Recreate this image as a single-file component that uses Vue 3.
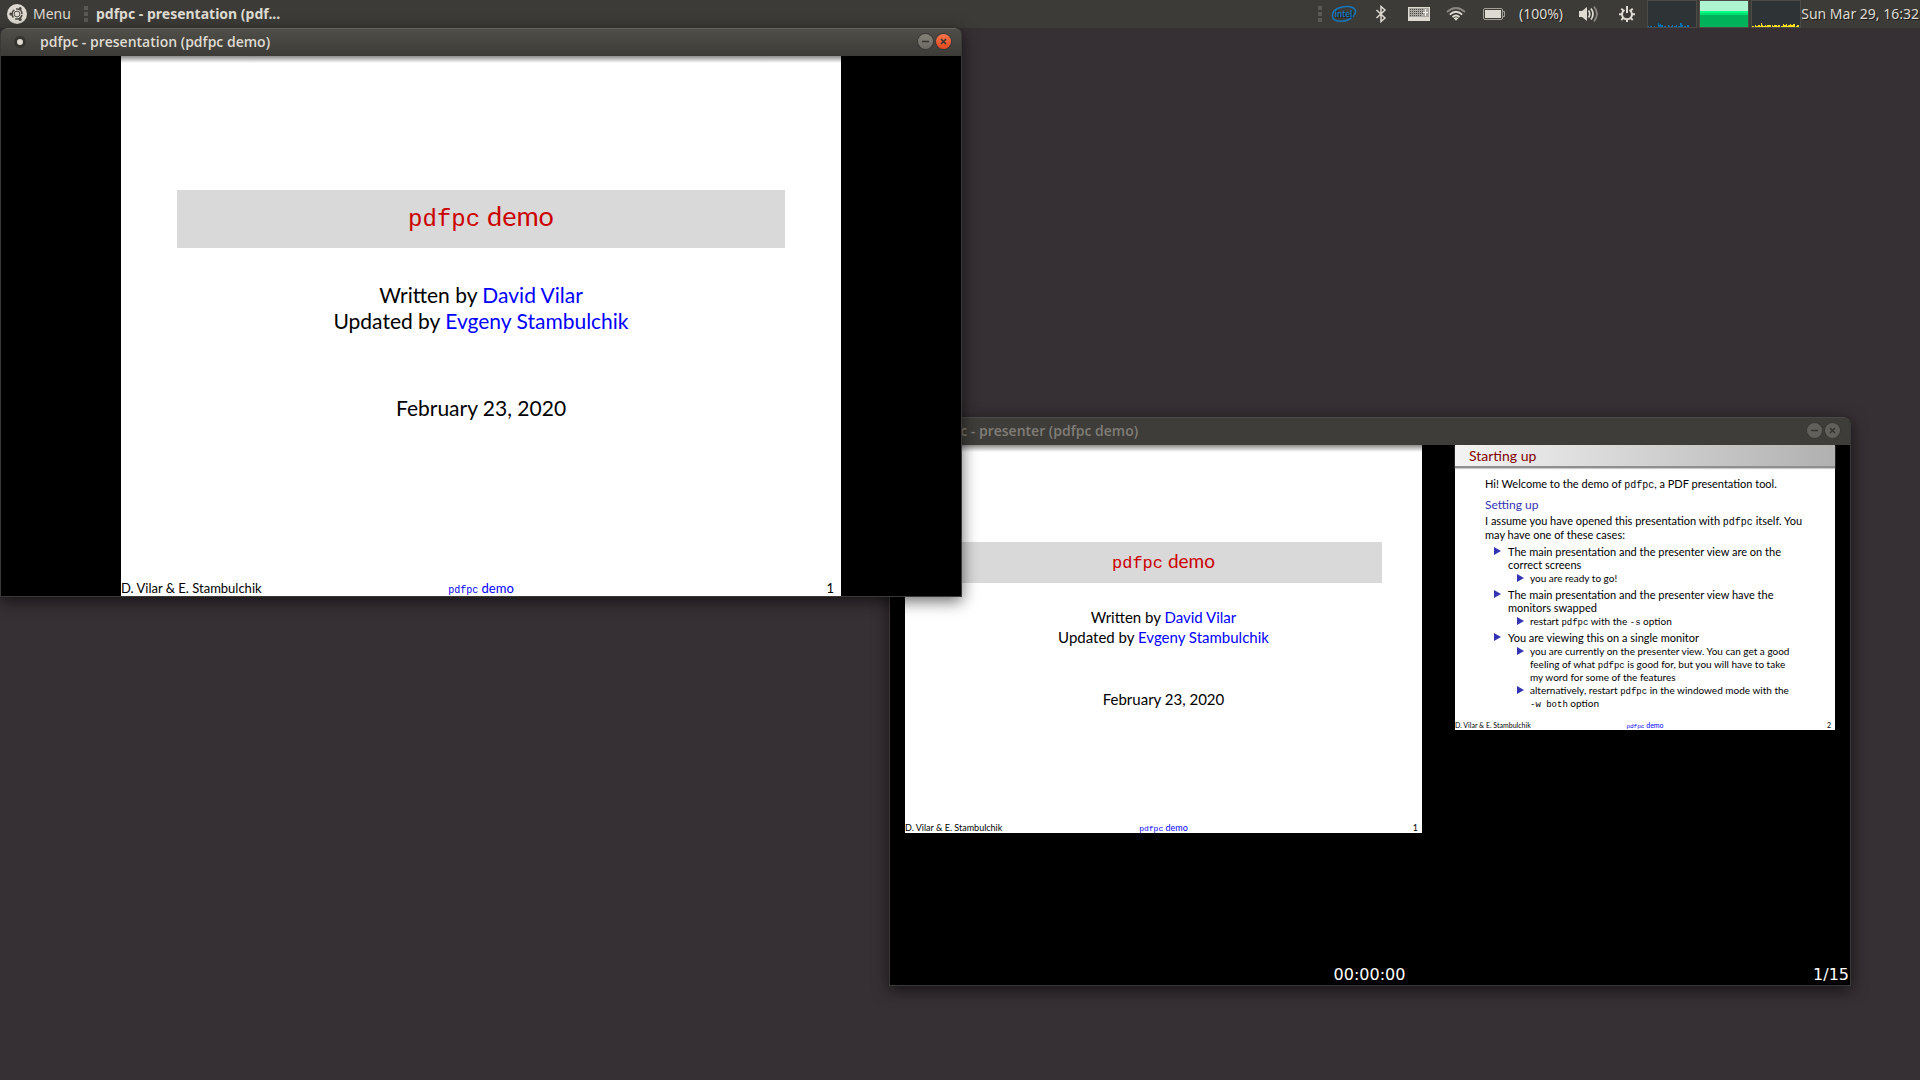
<script setup>
import { ref } from 'vue'

const timer = ref('00:00:00')
const position = ref('1/15')

const cpu = [1, 0, 1, 1, 0, 0, 1, 0, 0, 0, 4, 2, 3, 2, 2, 0, 1, 1, 0, 0, 2, 1, 0, 1, 2, 0, 1, 1, 2, 0, 1, 1, 4, 4, 2, 0, 1, 1, 0, 2, 2, 0]
const net = [1, 1, 0, 2, 1, 1, 2, 2, 1, 4, 2, 1, 1, 2, 1, 2, 2, 2, 2, 0, 2, 1, 2, 2, 2, 1, 2, 2, 0, 1, 1, 3, 2, 2, 3, 1, 2, 2, 3, 2, 2, 3, 3, 0, 1, 2, 2]
</script>

<template>
  <div class="desktop">
    <header class="panel">
      <button class="menu" type="button">
        <svg width="20" height="20" viewBox="0 0 20 20" aria-hidden="true">
          <circle cx="10" cy="10" r="10" fill="#dfdbd2" />
          <g fill="none" stroke="#4a4842">
            <circle cx="10" cy="10" r="5" stroke-width="1.6" stroke-dasharray="8.5 2" stroke-dashoffset="-1" />
            <circle cx="10" cy="10" r="2.9" stroke-width="1" />
          </g>
          <circle cx="3.8" cy="10" r="1.5" fill="#4a4842" />
          <circle cx="13.2" cy="4.6" r="1.5" fill="#4a4842" />
          <circle cx="13.2" cy="15.4" r="1.5" fill="#4a4842" />
        </svg>
        <span>Menu</span>
      </button>
      <span class="grip"><i></i><i></i><i></i></span>
      <button class="task" type="button">pdfpc - presentation (pdf...</button>

      <div class="tray">
        <span class="grip"><i></i><i></i><i></i></span>
        <span class="slot w34">
          <svg width="26" height="18" viewBox="0 0 26 18" aria-label="intel">
            <path d="M3 6 C7 1.500 20 -.5 24 4.500 C26.500 8.500 20 15.500 11 16.300 C5 16.800 1.500 14.500 1.500 11 C1.500 9.500 2 7.600 3 6" fill="none" stroke="#1576bb" stroke-width="1.500" />
            <text x="12.500" y="12" text-anchor="middle" font-size="9" font-weight="700" font-family="Lato, sans-serif" fill="#1576bb">intel</text>
          </svg>
        </span>
        <span class="slot w40">
          <svg width="12" height="18" viewBox="0 0 12 18" fill="none" stroke="#dfdbd2" stroke-width="1.500" aria-label="Bluetooth">
            <path d="M1.500 5 L10 13 L6 16.500 V1.500 L10 5 L1.500 13" />
          </svg>
        </span>
        <span class="slot w36">
          <svg width="22" height="14" viewBox="0 0 22 14" aria-label="Keyboard">
            <rect width="22" height="14" fill="#dfdbd2" />
            <rect x="1" y="1" width="20" height="9" fill="#a9a7a0" />
            <path d="M2 2.500 H15 M2 4.500 H15 M2 6.500 H15 M2 8.500 H13" stroke="#4a4842" stroke-dasharray="1 1" />
            <path d="M15 5.500 H20 M17.500 2 V9" stroke="#f4f2ee" stroke-width="1" />
          </svg>
        </span>
        <span class="slot w38">
          <svg width="20" height="14" viewBox="0 0 20 14" fill="none" stroke-width="1.800" aria-label="Wi-Fi">
            <path d="M1 5 Q10 -3 19 5" stroke="#8b8880" />
            <path d="M3.800 7.600 Q10 2 16.200 7.600" stroke="#dfdbd2" />
            <path d="M6.500 10 Q10 7 13.500 10" stroke="#dfdbd2" />
            <path d="M7.500 11 L10 13.800 L12.500 11 Q10 9.300 7.500 11Z" fill="#dfdbd2" stroke="none" />
          </svg>
        </span>
        <span class="slot w38">
          <svg width="22" height="12" viewBox="0 0 22 12" aria-label="Battery">
            <rect x=".5" y=".5" width="19" height="11" rx="1.500" fill="none" stroke="#a3a098" />
            <rect x="2" y="2" width="16" height="8" fill="#dfdbd2" />
            <path d="M20 3.500 H21.500 V8.500 H20" fill="none" stroke="#a3a098" />
          </svg>
        </span>
        <span class="slot w56">(100%)</span>
        <span class="slot w40">
          <svg width="20" height="18" viewBox="0 0 20 18" fill="none" aria-label="Volume">
            <path d="M0 6 H3 L8 2 V16 L3 12 H0Z" fill="#dfdbd2" />
            <path d="M9.500 5.500 Q12 9 9.500 12.500 M12 3.500 Q16 9 12 14.500" stroke="#dfdbd2" stroke-width="1.700" />
            <path d="M15 1.500 Q21 9 15 16.500" stroke="#8b8880" stroke-width="1.700" />
          </svg>
        </span>
        <span class="slot w36">
          <svg width="16" height="16" viewBox="0 0 16 16" fill="none" stroke="#dfdbd2" aria-label="Session">
            <path d="M5.500 4 A5 5 0 1 0 10.500 4" stroke-width="2" />
            <path d="M8 0 V7" stroke-width="2" />
            <path d="M0 8.300 H3 M13 8.300 H16 M8 13 V16 M2.300 2.600 L4.300 4.600 M13.700 2.600 L11.700 4.600 M2.300 14 L4.400 11.900 M13.700 14 L11.600 11.900" stroke-width="2" />
          </svg>
        </span>
        <div class="graphs">
          <div class="graph cpu"><i v-for="(v, i) in cpu" :key="i" :style="{ height: v + 'px' }"></i></div>
          <div class="graph mem"></div>
          <div class="graph net"><i v-for="(v, i) in net" :key="i" :style="{ height: v + 'px' }"></i></div>
        </div>
        <time class="clock">Sun Mar 29, 16:32</time>
      </div>
    </header>

    <section class="window presenter">
      <div class="titlebar">
        <button class="dot" type="button" aria-label="Window menu"></button>
        <h2>pdfpc - presenter (pdfpc demo)</h2>
        <button class="ctl" type="button" aria-label="Minimize">
          <svg width="15" height="15" viewBox="0 0 15 15"><path d="M4 7.500 H11" /></svg>
        </button>
        <button class="ctl" type="button" aria-label="Close">
          <svg width="15" height="15" viewBox="0 0 15 15"><path d="M5 5 L10 10 M10 5 L5 10" /></svg>
        </button>
      </div>
      <div class="stage">
        <div class="previews">
          <article class="slide cover small">
            <h1><code>pdfpc</code> demo</h1>
            <p class="authors">Written by <a href="#">David Vilar</a><br />Updated by <a href="#">Evgeny Stambulchik</a></p>
            <p class="date">February 23, 2020</p>
            <footer><span>D. Vilar &amp; E. Stambulchik</span><a href="#"><code>pdfpc</code> demo</a><span>1</span></footer>
          </article>
          <article class="slide next">
            <h3>Starting up</h3>
            <div class="body">
              <p>Hi! Welcome to the demo of <code>pdfpc</code>, a PDF presentation tool.</p>
              <h4>Setting up</h4>
              <p>I assume you have opened this presentation with <code>pdfpc</code> itself. You<br />may have one of these cases:</p>
              <ul>
                <li>The main presentation and the presenter view are on the<br />correct screens
                  <ul><li>you are ready to go!</li></ul>
                </li>
                <li>The main presentation and the presenter view have the<br />monitors swapped
                  <ul><li>restart <code>pdfpc</code> with the <code>-s</code> option</li></ul>
                </li>
                <li>You are viewing this on a single monitor
                  <ul>
                    <li>you are currently on the presenter view. You can get a good<br />feeling of what <code>pdfpc</code> is good for, but you will have to take<br />my word for some of the features</li>
                    <li>alternatively, restart <code>pdfpc</code> in the windowed mode with the<br /><code>-w both</code> option</li>
                  </ul>
                </li>
              </ul>
            </div>
            <footer><span>D. Vilar &amp; E. Stambulchik</span><a href="#"><code>pdfpc</code> demo</a><span>2</span></footer>
          </article>
        </div>
        <div class="status"><span class="timer">{{ timer }}</span><span class="position">{{ position }}</span></div>
      </div>
    </section>

    <section class="window presentation">
      <div class="titlebar">
        <button class="dot" type="button" aria-label="Window menu"></button>
        <h2>pdfpc - presentation (pdfpc demo)</h2>
        <button class="ctl" type="button" aria-label="Minimize">
          <svg width="15" height="15" viewBox="0 0 15 15"><path d="M4 7.500 H11" /></svg>
        </button>
        <button class="ctl close" type="button" aria-label="Close">
          <svg width="15" height="15" viewBox="0 0 15 15"><path d="M5 5 L10 10 M10 5 L5 10" /></svg>
        </button>
      </div>
      <div class="stage">
        <article class="slide cover">
          <h1><code>pdfpc</code> demo</h1>
          <p class="authors">Written by <a href="#">David Vilar</a><br />Updated by <a href="#">Evgeny Stambulchik</a></p>
          <p class="date">February 23, 2020</p>
          <footer><span>D. Vilar &amp; E. Stambulchik</span><a href="#"><code>pdfpc</code> demo</a><span>1</span></footer>
        </article>
      </div>
    </section>
  </div>
</template>

<style>
body {
  margin: 0;
  background: #362f33;
}
</style>

<style scoped>
* {
  box-sizing: border-box;
}
h1, h2, h3, h4, p, ul {
  margin: 0;
  padding: 0;
  font-weight: 400;
}
ul {
  list-style: none;
}
button {
  border: 0;
  padding: 0;
  background: none;
  font: inherit;
  color: inherit;
}
a {
  color: #0000ff;
  text-decoration: none;
}
code {
  font-family: "Liberation Mono", monospace;
  line-height: 1;
}
.desktop {
  position: relative;
  min-height: 100vh;
  overflow: hidden;
  background: #362f33;
  font-family: "Noto Sans", "Open Sans", sans-serif;
}

/* top panel */
.panel {
  display: flex;
  align-items: center;
  height: 28px;
  padding-left: 7px;
  background: #3c3b37;
  color: #dfdbd2;
  font-size: 14px;
  line-height: 28px;
  text-shadow: 1px 1px #1e1d1b;
  white-space: nowrap;
}
.menu {
  display: flex;
  align-items: center;
  gap: 6px;
  width: 72px;
}
.grip {
  display: flex;
  flex-direction: column;
  align-items: center;
  gap: 2px;
  width: 14px;
}
.grip i {
  width: 4px;
  height: 4px;
  background: #5a5955;
}
.task {
  margin-left: 3px;
  font-weight: 700;
}
.tray {
  display: flex;
  align-items: center;
  margin-left: auto;
}
.slot {
  display: flex;
  align-items: center;
  justify-content: center;
}
.w34 { width: 34px; }
.w36 { width: 36px; }
.w38 { width: 38px; }
.w40 { width: 40px; }
.w56 { width: 56px; }
.graphs {
  display: flex;
  gap: 2px;
  margin-left: 2px;
}
.graph {
  display: flex;
  align-items: flex-end;
  width: 50px;
  height: 28px;
  border: 1px solid #4c4b46;
  background: #2e3436;
}
.graph i {
  width: 1px;
}
.cpu i { background: #0072b3; }
.net i { background: #ffe01b; }
.mem {
  background: linear-gradient(#aef4d0 10px, #00ff82 10px, #00ff82 12px, #00df6f 12px, #00df6f 14px, #00b35b 14px);
}
.clock {
  width: 119px;
  padding-right: 1px;
  text-align: right;
}

/* windows */
.window {
  position: absolute;
  width: calc(50% + 2px);
  border: 1px solid #3a3936;
  border-top: 0;
  border-radius: 6px 6px 0 0;
  background: #000;
  box-shadow: 0 4px 16px rgba(0, 0, 0, 0.6);
}
.presentation {
  top: 28px;
  left: 0;
}
.presenter {
  top: 417px;
  right: 69px;
}
.titlebar {
  display: flex;
  align-items: center;
  gap: 3px;
  height: 28px;
  padding: 0 10px 2px 13px;
  border-top: 1px solid #64625b;
  border-radius: 6px 6px 0 0;
  background: linear-gradient(#504e48, #3c3b37);
  color: #dfdbd2;
}
.titlebar h2 {
  flex: 1;
  padding-left: 11px;
  font-family: "Open Sans", "Noto Sans", sans-serif;
  font-size: 14px;
  font-weight: 600;
  line-height: 20px;
}
.presenter .titlebar {
  border-top-color: #4b4a45;
  background: #3e3d39;
  color: #807d78;
}
.dot {
  width: 12px;
  height: 12px;
  border: 3px solid #35342f;
  border-radius: 50%;
  background: #dfdbd2;
}
.ctl {
  display: flex;
  width: 15px;
  height: 15px;
  border-radius: 50%;
  background: linear-gradient(#85827a, #6b6961);
  box-shadow: 0 0 0 1px #3a3935;
}
.ctl path {
  fill: none;
  stroke: #35342f;
  stroke-width: 1.5;
}
.ctl.close {
  background: linear-gradient(#f9754c, #e0481c);
}
.presenter .ctl {
  background: #62605b;
}
.stage {
  display: flex;
  flex-direction: column;
  align-items: center;
  aspect-ratio: 16 / 9;
}

/* slides */
.slide {
  display: flex;
  flex-direction: column;
  aspect-ratio: 4 / 3;
  background: #fff;
  color: #000;
  font-family: Lato, sans-serif;
}
.cover {
  height: 100%;
  padding-top: 134px;
  background: linear-gradient(#8c8c8c, #fff 7px);
  font-size: 21px;
  line-height: 26px;
  text-align: center;
}
.cover h1 {
  margin: 0 56px;
  padding-bottom: 6px;
  background: #d9d9d9;
  color: #cc0000;
  font-size: 27px;
  line-height: 52px;
}
.cover h1 code {
  font-size: 24px;
}
.authors {
  margin-top: 34px;
}
.date {
  margin-top: 61px;
}
footer {
  display: grid;
  grid-template-columns: 1fr auto 1fr;
  margin-top: auto;
  font-size: 13px;
  line-height: 14px;
}
footer span:first-child {
  text-align: left;
}
footer span:last-child {
  padding-right: 7px;
  text-align: right;
}
footer code {
  font-size: 10px;
}
.small {
  height: auto;
  padding-top: 97px;
  font-size: 15px;
  line-height: 20px;
}
.small h1 {
  margin: 0 40px;
  padding-bottom: 4px;
  font-size: 19px;
  line-height: 37px;
}
.small h1 code {
  font-size: 17px;
}
.small .authors {
  margin-top: 24px;
}
.small .date {
  margin-top: 42px;
}
.small footer {
  font-size: 9px;
  line-height: 10px;
}
.small footer span:last-child,
.next footer span:last-child {
  padding-right: 4px;
}
.small footer code {
  font-size: 8px;
}

/* presenter screen */
.previews {
  display: grid;
  grid-template-columns: 517fr 380fr;
  align-items: start;
  gap: 33px;
  width: 100%;
  padding: 0 15px;
}
.next {
  font-size: 11px;
  line-height: 14px;
  white-space: nowrap;
}
.next h3 {
  padding-left: 14px;
  border-bottom: 2px solid #8f8f8f;
  background: linear-gradient(90deg, #f4f4f4, #b0b0b0);
  box-shadow: 0 1px 1px #ccc;
  color: #800000;
  font-size: 14px;
  line-height: 21px;
}
.body {
  padding: 9px 0 0 30px;
}
.body h4 {
  margin: 7px 0 2px;
  color: #3333b3;
  font-size: 12px;
  line-height: 14px;
}
.body li {
  position: relative;
  padding-left: 23px;
  margin-top: 3px;
  line-height: 13px;
}
.body li::before {
  content: "";
  position: absolute;
  top: 2px;
  left: 9px;
  border-left: 7px solid #3333b3;
  border-top: 4px solid transparent;
  border-bottom: 4px solid transparent;
}
.body li li {
  padding-left: 22px;
  margin-top: 1px;
  font-size: 10px;
}
.body li li + li {
  margin-top: 0;
}
.next code {
  font-size: 10px;
}
.next li li code {
  font-size: 9px;
}
.next footer {
  font-size: 7px;
  line-height: 8px;
}
.next footer code {
  font-size: 6px;
}
.status {
  display: grid;
  grid-template-columns: 1fr auto 1fr;
  width: 100%;
  margin-top: auto;
  padding-right: 1px;
  color: #fff;
  font-family: "DejaVu Sans", sans-serif;
  font-size: 16px;
  line-height: 20px;
}
.timer {
  grid-column: 2;
}
.position {
  text-align: right;
}
</style>
